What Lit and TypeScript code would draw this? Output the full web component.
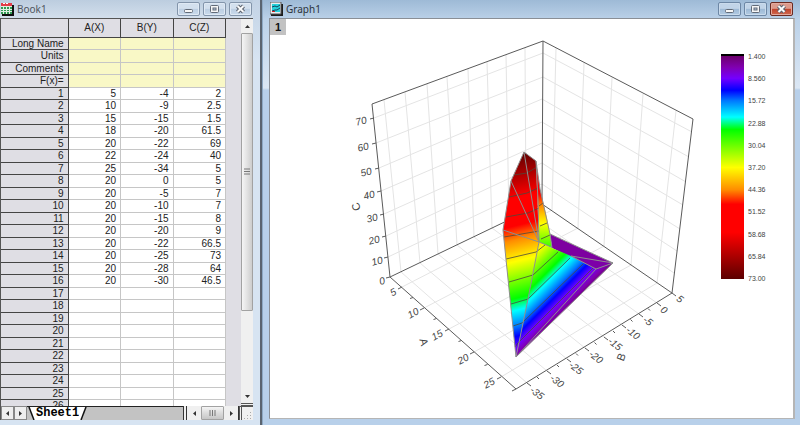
import { LitElement, html, css, svg } from "lit";
import { customElement } from "lit/decorators.js";

const DATA: number[][] = [
  [5, -4, 2], [10, -9, 2.5], [15, -15, 1.5], [18, -20, 61.5],
  [20, -22, 69], [22, -24, 40], [25, -34, 5], [20, 0, 5],
  [20, -5, 7], [20, -10, 7], [20, -15, 8], [20, -20, 9],
  [20, -22, 66.5], [20, -25, 73], [20, -28, 64], [20, -30, 46.5],
];
const COLUMNS = ["A(X)", "B(Y)", "C(Z)"];
const META = ["Long Name", "Units", "Comments", "F(x)="];
const ROW_COUNT = 26;

type Point = [number, number];

// Colour scale: [z value, colour]
const SCALE: [number, string][] = [
  [1.4, "#6c006c"], [5, "#8000b0"], [8.56, "#7400ff"], [12.4, "#0000ff"],
  [15.72, "#0078ff"], [21, "#00ffff"], [25, "#00ff00"], [37.2, "#ffff00"],
  [44.36, "#ff8c00"], [49, "#ff0000"], [58, "#ff0000"], [73, "#5c0000"],
];

const stops = (from: number, to: number) => {
  const ordered = from < to ? SCALE : [...SCALE].reverse();
  return ordered.map(([z, color]) => svg`<stop offset=${(z - from) / (to - from)} stop-color=${color}></stop>`);
};

// Lines of constant A: A axis, floor edge, top edge of the right wall
const A_GRID: Point[][] = [
  [[402, 287], [552, 210], [556, 48]],
  [[424, 308], [578, 228], [584, 63]],
  [[449, 329], [604, 246], [612, 78]],
  [[474, 352], [631, 265], [643, 94]],
  [[501, 377], [657, 283], [676, 111]],
];
// Lines of constant B: B axis, floor edge, top edge of the left wall
const B_GRID: Point[][] = [
  [[527, 383], [401, 272], [384, 100]],
  [[547, 371], [420, 263], [405, 92]],
  [[567, 359], [438, 254], [427, 84]],
  [[585, 348], [457, 245], [447, 77]],
  [[604, 337], [474, 237], [468, 69]],
  [[622, 325], [492, 228], [487, 62]],
  [[639, 314], [509, 220], [506, 55]],
  [[657, 303], [526, 212], [525, 48]],
];
// Lines of constant C: C axis, back edge, right edge
const C_GRID: Point[][] = [
  [[388, 257], [542, 184], [674, 273]],
  [[386, 236], [542, 163], [677, 251]],
  [[384, 214], [542, 143], [680, 229]],
  [[381, 191], [542, 122], [683, 205]],
  [[379, 168], [542, 99], [686, 182]],
  [[376, 143], [543, 77], [689, 157]],
  [[374, 118], [543, 53], [692, 132]],
];
const BOX: Point[][] = [
  [[372, 104], [543, 41], [693, 119], [672, 293], [516, 389], [390, 277], [372, 104]],
  [[543, 41], [542, 204], [672, 293]],
  [[542, 204], [390, 277]],
];
const CONTOURS: Point[][] = [
  [[514, 175], [527, 173], [537, 167]],
  [[509, 197], [527, 193], [538, 188]],
  [[506, 217], [528, 213], [539, 208]],
  [[504, 237], [539, 231]],
  [[506, 259], [536, 252], [545, 245]],
  [[509, 282], [533, 275], [558, 252]],
  [[511, 304], [528, 299], [570, 258]],
  [[513, 326], [522, 323], [583, 264]],
  [[515, 347], [518, 343], [593, 268]],
  [[539, 206], [543, 203]],
  [[540, 226], [547, 223]],
  [[541, 239], [550, 235]],
];
const MESH: Point[][] = [
  [[524, 152], [511, 181], [503, 230], [516, 357], [613, 263], [550, 234], [540, 189], [536, 161], [524, 152]],
  [[524, 152], [539, 242]],
  [[511, 181], [539, 242]],
  [[503, 230], [539, 242]],
  [[536, 161], [538, 200], [539, 242], [551, 247]],
  [[539, 242], [528, 299], [516, 357], [596, 269], [613, 263], [571, 256]],
  [[571, 256], [596, 269]],
  [[550, 234], [552, 248]],
];
const TICKS: Record<"a" | "b" | "c", [string, number, number][]> = {
  c: [["0", 382, 281], ["10", 377, 261], ["20", 374, 240], ["30", 372, 218], ["40", 369, 195], ["50", 366, 172], ["60", 363, 147], ["70", 361, 121]],
  a: [["5", 393, 292], ["10", 413, 313], ["15", 437, 335], ["20", 463, 359], ["25", 489, 383]],
  b: [["-35", 537, 393], ["-30", 557, 381], ["-25", 576, 368], ["-20", 596, 357], ["-15", 615, 344], ["-10", 633, 333], ["-5", 648, 321], ["0", 664, 310], ["5", 680, 299]],
};
const LEGEND = ["1.400", "8.560", "15.72", "22.88", "30.04", "37.20", "44.36", "51.52", "58.68", "65.84", "73.00"];

const path = (points: Point[]) => "M" + points.map((p) => p.join(" ")).join("L");
const paths = (lines: Point[][]) => lines.map(path).join("");
const tickMarks = (starts: Point[], dx: number, dy: number) =>
  starts.map(([x, y]) => `M${x} ${y}l${dx} ${dy}`).join("");
const midpoints = (points: Point[]): Point[] =>
  points.slice(1).map(([x, y], i) => [(x + points[i][0]) / 2, (y + points[i][1]) / 2]);

@customElement("window-buttons")
class WindowButtons extends LitElement {
  static properties = { active: { type: Boolean, reflect: true } };
  static styles = css`
    :host { display: flex; gap: 3px; }
    .btn {
      box-sizing: border-box; width: 23px; height: 14px; padding: 0;
      display: grid; place-items: center;
      border: 1px solid #8395ab; border-radius: 2px;
      background: linear-gradient(#d3e0ee 45%, #bccee2 50%, #cbdbec);
      box-shadow: inset 0 0 0 1px #dfe9f4;
    }
    :host([active]) .btn {
      background: linear-gradient(#c1d4e8 45%, #9db9d5 50%, #b2cbe3);
      border-color: #6d87a5; box-shadow: inset 0 0 0 1px #cadbec;
    }
    :host([active]) .close {
      background: linear-gradient(#dc9a8c 45%, #c1432b 50%, #cf6a50);
      border-color: #6a2a22; box-shadow: inset 0 0 0 1px #e3a99d;
    }
  `;
  render() {
    return html`
      <button class="btn" aria-label="Minimize"><svg width="11" height="10" viewBox="0 0 11 10"><rect x="1.5" y="5.5" width="8" height="3" rx="1" fill="#f6f6f6" stroke="#626b78"></rect></svg></button>
      <button class="btn" aria-label="Maximize"><svg width="11" height="10" viewBox="0 0 11 10"><rect x="1.5" y="1.5" width="8" height="7" rx="1" fill="#f6f6f6" stroke="#626b78"></rect><rect x="4" y="4" width="3" height="2" fill="#b9cbe0" stroke="#626b78"></rect></svg></button>
      <button class="btn close" aria-label="Close"><svg width="11" height="10" viewBox="0 0 11 10"><path d="M2.5 2 8.5 8M8.5 2 2.5 8" stroke="#59616e" stroke-width="4"></path><path d="M2.5 2 8.5 8M8.5 2 2.5 8" stroke="#fafafa" stroke-width="2"></path></svg></button>
    `;
  }
}

@customElement("book-window")
class BookWindow extends LitElement {
  static styles = css`
    :host {
      box-sizing: border-box; display: flex; flex-direction: column; min-height: 0;
      padding: 0 7px 5px 0; border-right: 2px solid #5a6470;
      background: linear-gradient(#c3d3e5, #d7e4f2 60px);
      font: 10px "Liberation Sans", Arial, sans-serif; color: #222;
    }
    .title {
      display: flex; align-items: center; gap: 3px; height: 18px; flex: none;
      padding-right: 1px; background: linear-gradient(#bccddf, #d3dfec);
    }
    .name { flex: 1; font: 10px/16px "Noto Sans", sans-serif; color: #51565e; }
    .body { flex: 1; min-height: 0; display: flex; background: #dfdee4; border-top: 1px solid #555; border-left: 1px solid #555; }
    .sheet { flex: 1; overflow: hidden; }
    table { table-layout: fixed; width: 225px; border-collapse: separate; border-spacing: 0; }
    th, td { box-sizing: border-box; padding: 0 4px 0 0; text-align: right; font-weight: normal; line-height: 11px; height: 12px; }
    td { background: #fff; border-right: 1px solid #c6c6c6; border-bottom: 1px solid #c6c6c6; }
    th { background: #dfdee4; border-right: 1px solid #444; border-bottom: 1px solid #444; }
    thead th { height: 19px; padding: 0; text-align: center; line-height: 18px; }
    tbody tr:nth-child(even) th, tbody tr:nth-child(even) td { height: 13px; line-height: 12px; }
    .meta td { background: #f9f8c6; }
    .head { width: 67px; }
    .col { width: 52px; }
    .vbar {
      width: 12px; flex: none; display: flex; flex-direction: column;
      background: #f0f0f0; border-bottom: 3px double #555;
    }
    .arrow { border: 0; padding: 0; margin: 0; background: none; display: grid; place-items: center; }
    .vbar .arrow { height: 14px; }
    .vtrack { flex: 1; }
    .thumb { box-sizing: border-box; border: 1px solid #a2a2a2; border-radius: 1px; display: grid; place-items: center; }
    .vthumb { height: 78%; background: linear-gradient(90deg, #f5f5f5, #e2e2e2 50%, #cdcdcd); }
    .tabs { display: flex; height: 14px; flex: none; background: #c3c3c3; border-left: 1px solid #555; }
    .step { width: 13px; box-sizing: border-box; border: 1px solid #888; padding: 0; background: #eee; display: grid; place-items: center; }
    .tabwrap { display: flex; align-items: stretch; border-top: 1px solid #222; box-sizing: border-box; flex: 1; padding-left: 1px; }
    .slash { width: 8px; flex: none; }
    .tab { border: 0; padding: 0; height: 13px; background: #fff; color: #000; font: bold 12px/13px "Liberation Mono", monospace; }
    .divider { width: 4px; background: linear-gradient(90deg, #333 1px, #eee 1px 3px, #333 3px); }
    .hbar { width: 51px; display: flex; background: #f0f0f0; border-right: 1px solid #333; }
    .hbar .arrow { width: 14px; }
    .hthumb { flex: 1; background: linear-gradient(#f5f5f5, #dcdcdc 50%, #c6c6c6); }
    .grip { width: 14px; background: #f0f0f0; border-left: 3px double #555; border-top: 1px solid #555; display: grid; place-items: end; box-sizing: border-box; }
  `;
  render() {
    return html`
      <div class="title">
        <svg width="14" height="14" viewBox="0 0 14 14"><path d="M2 3h12v11H2z" fill="#111"></path><path d="M1 1h11v11H1z" fill="#dff0e2"></path><path d="M1 1h11v3H1z" fill="#e33b48"></path><path d="M1 5h2v2H1zM1 8h2v1H1zM1 10h2v2H1zM4 5h2v2H4zM7 5h2v2H7zM10 5h2v2h-2zM4 8h2v1H4zM7 8h2v1H7zM10 8h2v1h-2zM4 10h2v2H4zM7 10h2v2H7zM10 10h2v2h-2z" fill="#2f9a54"></path><path d="M3 2l1-1 1 1M6 2l1-1 1 1" stroke="#fff" fill="none"></path></svg>
        <span class="name">Book1</span>
        <window-buttons></window-buttons>
      </div>
      <div class="body">
        <div class="sheet">
          <table>
            <thead><tr><th class="head"></th>${COLUMNS.map((c) => html`<th class="col" scope="col">${c}</th>`)}</tr></thead>
            <tbody>
              ${META.map((m) => html`<tr class="meta"><th scope="row">${m}</th><td></td><td></td><td></td></tr>`)}
              ${Array.from({ length: ROW_COUNT }, (_, i) => html`
                <tr><th scope="row">${i + 1}</th>${COLUMNS.map((_c, k) => html`<td>${DATA[i]?.[k]}</td>`)}</tr>`)}
            </tbody>
          </table>
        </div>
        <div class="vbar">
          <button class="arrow" aria-label="Scroll up"><svg width="5" height="3"><path d="M0 3 2.5 0 5 3z" fill="#333"></path></svg></button>
          <div class="vtrack"><div class="thumb vthumb"><svg width="6" height="7"><path d="M0 1h6M0 3.5h6M0 6h6" stroke="#777"></path></svg></div></div>
          <button class="arrow" aria-label="Scroll down"><svg width="5" height="3"><path d="M0 0 2.5 3 5 0z" fill="#333"></path></svg></button>
        </div>
      </div>
      <div class="tabs">
        <button class="step" aria-label="Previous sheet"><svg width="3" height="5"><path d="M3 0 0 2.5 3 5z" fill="#333"></path></svg></button>
        <button class="step" aria-label="Next sheet"><svg width="3" height="5"><path d="M0 0 3 2.5 0 5z" fill="#333"></path></svg></button>
        <div class="tabwrap">
          <svg class="slash" viewBox="0 0 8 13"><path d="M1 0H8V13H6z" fill="#fff"></path><path d="M1 0 6 13" stroke="#111" stroke-width="1.5"></path></svg>
          <button class="tab">Sheet1</button>
          <svg class="slash" viewBox="0 0 8 13"><path d="M0 0H7L2 13H0z" fill="#fff"></path><path d="M7 0 2 13" stroke="#111" stroke-width="1.5"></path></svg>
        </div>
        <div class="divider"></div>
        <div class="hbar">
          <button class="arrow" aria-label="Scroll left"><svg width="3" height="5"><path d="M3 0 0 2.5 3 5z" fill="#333"></path></svg></button>
          <div class="thumb hthumb"><svg width="7" height="6"><path d="M1 0v6M3.5 0v6M6 0v6" stroke="#777"></path></svg></div>
          <button class="arrow" aria-label="Scroll right"><svg width="3" height="5"><path d="M0 0 3 2.5 0 5z" fill="#333"></path></svg></button>
        </div>
        <div class="grip"><svg width="9" height="9"><path d="M6 1h1v1H6zM6 4h1v1H6zM3 4h1v1H3zM6 7h1v1H6zM3 7h1v1H3zM0 7h1v1H0z" fill="#aaa"></path></svg></div>
      </div>
    `;
  }
}

@customElement("graph-window")
class GraphWindow extends LitElement {
  static styles = css`
    :host {
      box-sizing: border-box; display: flex; flex-direction: column; min-height: 0; min-width: 0;
      padding: 0 5px 6px 6px; border-left: 1px solid #8ea9c4;
      background: linear-gradient(#9ebad6, #bcd2e9 20px, #dbe7f4 88px, #b8d0ea 90px);
    }
    .title { display: flex; align-items: center; gap: 3px; height: 18px; flex: none; padding: 0 2px 0 1px; }
    .name { flex: 1; font: 10px/16px "Noto Sans", sans-serif; color: #2c333c; }
    .page { flex: 1; min-height: 0; background: #fff; border: 1px solid #8a8f96; border-right: 2px solid #b5b5b5; border-bottom-color: #b5b5b5; display: grid; }
    .layer, .plot { grid-area: 1 / 1; }
    .layer { width: 16px; height: 16px; border: 0; padding: 0; background: #c2c2c2; color: #111; font: bold 11px/16px "Liberation Sans", Arial, sans-serif; z-index: 1; }
    .plot { display: block; width: 100%; height: 100%; min-height: 0; font-family: "Liberation Sans", Arial, sans-serif; fill: #444; }
    .grid { fill: none; stroke: #e4e4e4; }
    .box { fill: none; stroke: #5a5a5a; }
    .contour { fill: none; stroke: #4a4a3c; stroke-opacity: 0.8; }
    .mesh { fill: none; stroke: #8e8e8e; stroke-linejoin: round; }
    .tick { font-size: 10px; text-anchor: middle; dominant-baseline: central; }
    .axis { font-size: 11px; text-anchor: middle; dominant-baseline: central; }
    .slant { font-style: italic; }
    .legend { font-size: 7px; dominant-baseline: central; }
  `;
  render() {
    const aStarts = A_GRID.map((g) => g[0]);
    const bStarts = B_GRID.map((g) => g[0]);
    const cStarts = C_GRID.map((g) => g[0]);
    const label = (list: [string, number, number][], angle: number, cls: string) =>
      list.map(([t, x, y]) => svg`<text class=${cls} transform=${`translate(${x} ${y}) rotate(${angle})`}>${t}</text>`);
    return html`
      <div class="title">
        <svg width="13" height="14" viewBox="0 0 13 14"><path d="M1 2h12v12H1z" fill="#1c1c1c"></path><path d="M0 0h11v12H0z" fill="#e8eef2" stroke="#555" stroke-width="1"></path><path d="M2 2h8v8H2z" fill="#27d3dc"></path><path d="M2 5l3-1 2 1 3-2M2 9l3-1 2 0 3-2" stroke="#12455e" fill="none"></path><path d="M2 9.5h3" stroke="#c22"></path></svg>
        <span class="name">Graph1</span>
        <window-buttons active></window-buttons>
      </div>
      <div class="page">
        <button class="layer">1</button>
        <svg class="plot" viewBox="271 19 521 399" preserveAspectRatio="xMidYMid meet" role="img" aria-label="3D surface plot of C against A and B">
          <defs>
            <linearGradient id="sheet" gradientUnits="userSpaceOnUse" x1="500" y1="157" x2="551" y2="361">${stops(73, 1.4)}</linearGradient>
            <linearGradient id="slope" gradientUnits="userSpaceOnUse" x1="348" y1="348" x2="440" y2="440">${stops(73, 1.4)}</linearGradient>
            <linearGradient id="rear" gradientUnits="userSpaceOnUse" x1="0" y1="134" x2="0" y2="313">${stops(73, 1.4)}</linearGradient>
            <linearGradient id="bar" x1="0" y1="0" x2="0" y2="1">${stops(1.4, 73)}</linearGradient>
          </defs>
          <path class="grid" d=${paths(A_GRID) + paths(B_GRID) + paths(C_GRID)}></path>
          <path class="box" d=${paths(BOX)
            + tickMarks([[390, 277], ...cStarts], -4, 1)
            + tickMarks([...aStarts, [516, 389]], -4, 2) + tickMarks(midpoints(aStarts), -3, 1)
            + tickMarks([...bStarts, [672, 293]], 4, 3) + tickMarks(midpoints(bStarts), 2, 2)}></path>
          <path d="M550 234 613 263 596 269 571 257 552 248z" fill="#7d00a0"></path>
          <path d="M536 161 540 189 547 218 550 234 552 248 539 242z" fill="url(#rear)"></path>
          <path d="M539 242 552 248 571 256 596 269 613 263 516 357z" fill="url(#slope)"></path>
          <path d="M571 256 613 263 596 269z" fill="#7d00a8"></path>
          <path d="M524 152 536 161 539 242 528 299 516 357 506 260 503 230 511 181z" fill="url(#sheet)"></path>
          <path class="contour" d=${paths(CONTOURS)}></path>
          <path class="mesh" d=${paths(MESH)}></path>
          ${label(TICKS.c, -15, "tick slant")}
          ${label(TICKS.a, -28, "tick slant")}
          ${label(TICKS.b, 38, "tick slant")}
          ${label([["C", 356, 207]], -110, "axis")}
          ${label([["A", 424, 342]], 75, "axis")}
          ${label([["B", 621, 357]], -70, "axis")}
          <rect x="721" y="56" width="23" height="223" fill="url(#bar)"></rect>
          <rect x="721" y="54" width="23" height="2" fill="#000"></rect>
          ${LEGEND.map((t, i) => svg`<text class="legend" x="748" y=${56 + Math.round(i * 22.2)}>${t}</text>`)}
        </svg>
      </div>
    `;
  }
}

@customElement("app-root")
class AppRoot extends LitElement {
  static styles = css`
    :host { display: flex; height: 100vh; overflow: hidden; background: #b8d0ea; }
    .book { flex: 0 0 262px; }
    .graph { flex: 1; }
  `;
  render() {
    return html`<book-window class="book"></book-window><graph-window class="graph"></graph-window>`;
  }
}
